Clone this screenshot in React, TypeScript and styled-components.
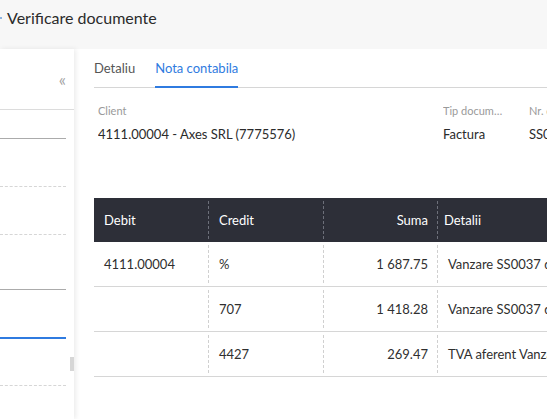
import styled, { createGlobalStyle } from "styled-components"

const GlobalStyle = createGlobalStyle`
    html, body {
        margin: 0;
        padding: 0;
        background: #fff;
        font-family: Lato, "Open Sans", sans-serif;
        color: #333;
        overflow: hidden;
    }
`

const Page = styled.div`
    width: 547px;
    height: 419px;
    display: flex;
    flex-direction: column;
    overflow: hidden;
`

const TopBar = styled.header`
    height: 49px;
    flex: none;
    background: #f7f7f7;
    display: flex;
    align-items: flex-start;
    padding-top: 8px;
    box-sizing: border-box;
`

const BackMark = styled.span`
    width: 2px;
    height: 2px;
    margin-top: 9px;
    background: #8cb4e0;
`

const Title = styled.h1`
    margin: 0 0 0 5px;
    font-size: 16px;
    font-weight: 400;
    line-height: 19px;
    color: #2b2b2b;
`

const Body = styled.div`
    flex: 1;
    display: flex;
    min-height: 0;
`

const Sidebar = styled.aside`
    width: 74px;
    flex: none;
    position: relative;
    background: #fff;
    box-shadow: 2px 0 5px rgba(0, 0, 0, 0.08);
    z-index: 1;
`

const CollapseRow = styled.div`
    height: 61px;
    box-sizing: border-box;
    border-bottom: 1px solid #dcdcdc;
    display: flex;
    justify-content: flex-end;
    padding: 22px 8px 0 0;
`

const Collapse = styled.span`
    font-size: 17px;
    line-height: 17px;
    color: #a4a4a4;
`

const SideItem = styled.div<{ $h: number; $line: "solid" | "dashed" | "active" }>`
    height: ${props => props.$h}px;
    margin-right: 8px;
    box-sizing: border-box;
    border-bottom: ${props =>
        props.$line === "active"
            ? "2px solid #2f7be0"
            : props.$line === "solid"
            ? "1px solid #ababab"
            : "1px dashed #d6d6d6"};
`

const ScrollThumb = styled.div`
    position: absolute;
    right: 0;
    top: 308px;
    width: 4px;
    height: 14px;
    background: #d6d6d6;
`

const Main = styled.main`
    flex: 1;
    min-width: 0;
    padding-left: 20px;
    overflow: hidden;
`

const Tabs = styled.nav`
    display: flex;
    gap: 20px;
    border-bottom: 1px solid #d6d6d6;
    height: 39px;
    box-sizing: border-box;
    padding-top: 11px;
`

const Tab = styled.div<{ $active?: boolean }>`
    font-size: 13px;
    line-height: 16px;
    color: ${props => (props.$active ? "#2f7be0" : "#555")};
    border-bottom: 2px solid ${props => (props.$active ? "#2f7be0" : "transparent")};
    height: 28px;
    box-sizing: border-box;
`

const InfoRow = styled.div`
    display: flex;
    padding: 16px 0 0 4px;
    height: 110px;
    box-sizing: border-box;
    white-space: nowrap;
`

const Field = styled.div<{ $w: number }>`
    width: ${props => props.$w}px;
    flex: none;
    overflow: hidden;
`

const Label = styled.div<{ $max?: number }>`
    font-size: 11px;
    line-height: 14px;
    color: #9a9a9a;
    overflow: hidden;
    text-overflow: ellipsis;
    max-width: ${props => (props.$max ? `${props.$max}px` : "none")};
`

const Value = styled.div`
    font-size: 13px;
    line-height: 16px;
    color: #2b2b2b;
    margin-top: 8px;
`

const Table = styled.div`
    width: 560px;
`

const cols = "115px 115px 114px 1fr"

const HeadRow = styled.div`
    display: grid;
    grid-template-columns: ${cols};
    height: 44px;
    background: #2d2f38;
    color: #fff;
    font-size: 13px;
`

const Row = styled.div`
    display: grid;
    grid-template-columns: ${cols};
    height: 45px;
    border-bottom: 1px solid #d6d6d6;
    box-sizing: border-box;
    font-size: 13px;
    color: #2f2f2f;
`

const Cell = styled.div<{ $right?: boolean; $pl?: number; $last?: boolean; $head?: boolean }>`
    display: flex;
    align-items: center;
    justify-content: ${props => (props.$right ? "flex-end" : "flex-start")};
    padding: 0 10px 0 ${props => props.$pl ?? 10}px;
    white-space: nowrap;
    overflow: hidden;
    position: relative;
    &::after {
        content: "";
        display: ${props => (props.$last ? "none" : "block")};
        position: absolute;
        right: 0;
        top: 3px;
        bottom: 3px;
        border-right: 1px dashed ${props => (props.$head ? "#6d707a" : "#d0d0d0")};
    }
`

const rows = [
    { debit: "4111.00004", credit: "%", suma: "1 687.75", detalii: "Vanzare SS0037 din 01.06.2024" },
    { debit: "", credit: "707", suma: "1 418.28", detalii: "Vanzare SS0037 din 01.06.2024" },
    { debit: "", credit: "4427", suma: "269.47", detalii: "TVA aferent Vanzare SS0037" },
]

export default function App() {
    return (
        <>
            <GlobalStyle />
            <Page>
                <TopBar>
                    <BackMark />
                    <Title>Verificare documente</Title>
                </TopBar>
                <Body>
                    <Sidebar>
                        <CollapseRow>
                            <Collapse>«</Collapse>
                        </CollapseRow>
                        <SideItem $h={29} $line="solid" />
                        <SideItem $h={48} $line="dashed" />
                        <SideItem $h={48} $line="dashed" />
                        <SideItem $h={55} $line="solid" />
                        <SideItem $h={49} $line="active" />
                        <SideItem $h={47} $line="dashed" />
                        <ScrollThumb />
                    </Sidebar>
                    <Main>
                        <Tabs>
                            <Tab>Detaliu</Tab>
                            <Tab $active>Nota contabila</Tab>
                        </Tabs>
                        <InfoRow>
                            <Field $w={345}>
                                <Label>Client</Label>
                                <Value>4111.00004 - Axes SRL (7775576)</Value>
                            </Field>
                            <Field $w={86}>
                                <Label $max={62}>Tip document</Label>
                                <Value>Factura</Value>
                            </Field>
                            <Field $w={120}>
                                <Label>Nr. document</Label>
                                <Value>SS0037</Value>
                            </Field>
                        </InfoRow>
                        <Table>
                            <HeadRow>
                                <Cell $head>Debit</Cell>
                                <Cell $head>Credit</Cell>
                                <Cell $head $right>Suma</Cell>
                                <Cell $head $last $pl={6}>Detalii</Cell>
                            </HeadRow>
                            {rows.map((r, i) => (
                                <Row key={i}>
                                    <Cell>{r.debit}</Cell>
                                    <Cell>{r.credit}</Cell>
                                    <Cell $right>{r.suma}</Cell>
                                    <Cell $last>{r.detalii}</Cell>
                                </Row>
                            ))}
                        </Table>
                    </Main>
                </Body>
            </Page>
        </>
    )
}
